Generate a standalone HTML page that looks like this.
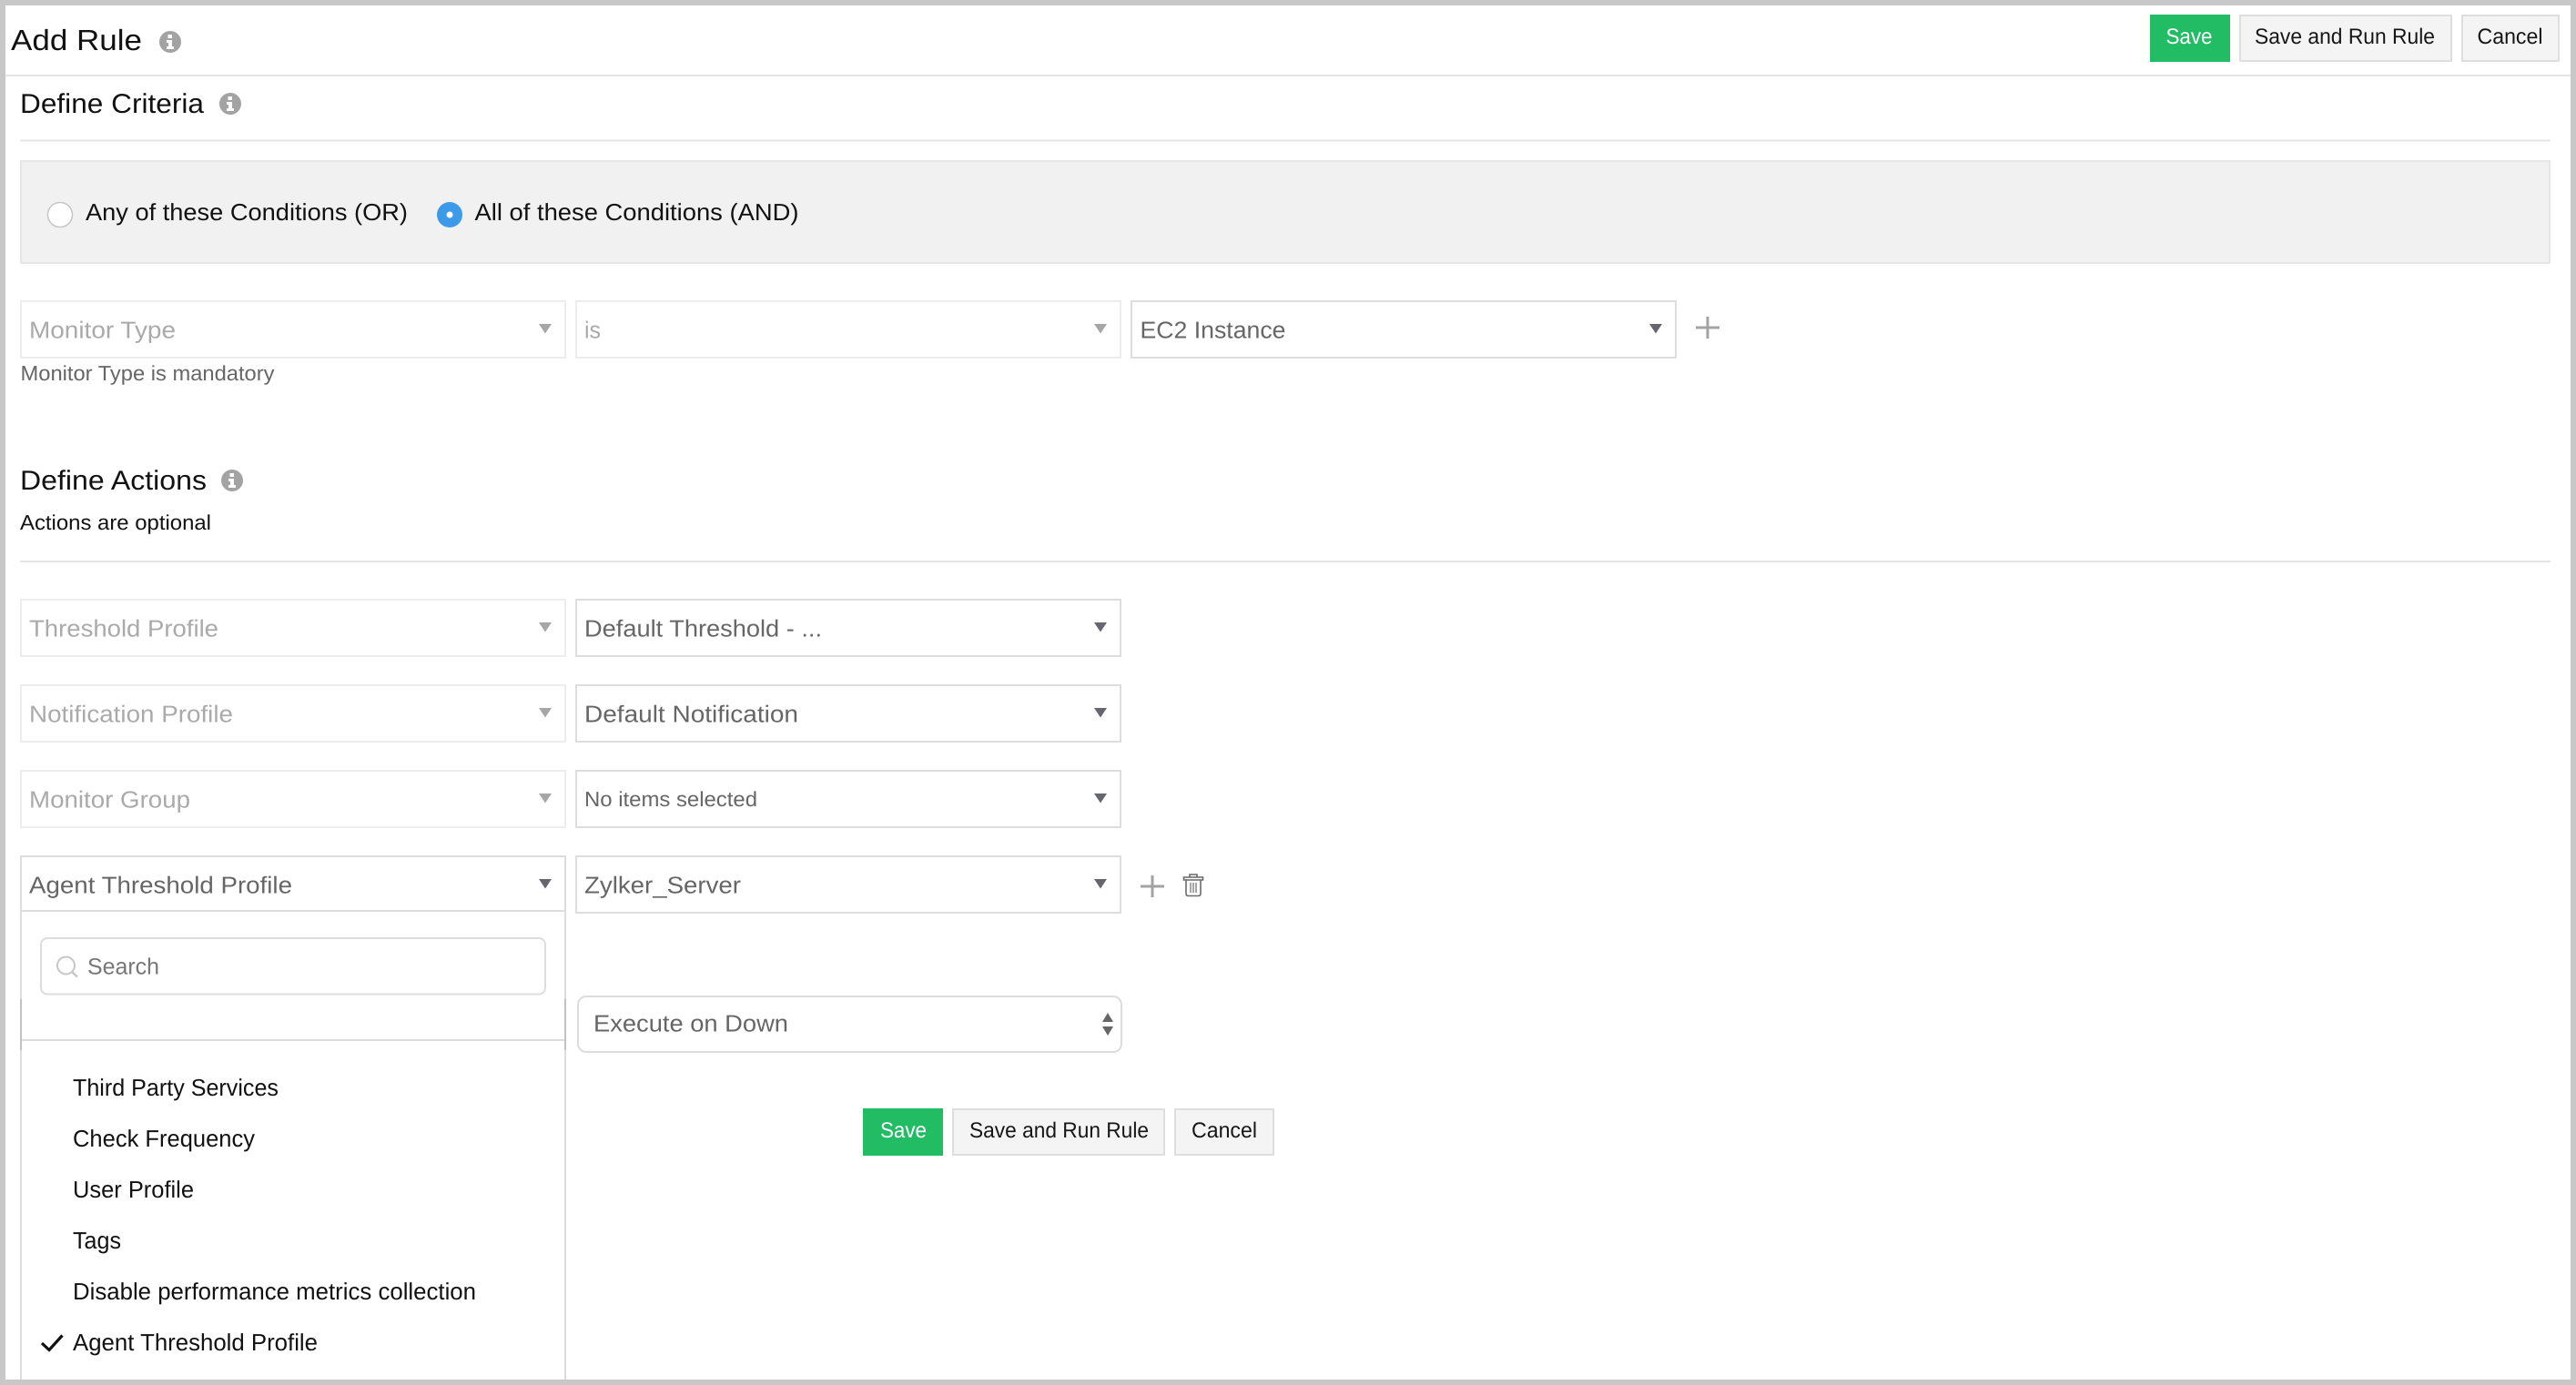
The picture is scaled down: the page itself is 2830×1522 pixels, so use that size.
<!DOCTYPE html>
<html lang="en">
<head>
<meta charset="utf-8">
<title>Add Rule</title>
<style>
html,body{margin:0;padding:0;background:#c8c8c8;width:2830px;height:1522px;overflow:hidden}
svg{display:block}
text{font-family:"Liberation Sans",sans-serif;font-size:26px;fill:#111;text-rendering:geometricPrecision}
.off{fill:#aaa}
.on{fill:#666}
.btn{font-size:24px;fill:#161616}
.sel-off{fill:#fff;stroke:#ededed;stroke-width:2}
.sel-on{fill:#fff;stroke:#ddd;stroke-width:2}
.gbtn{fill:#f4f4f4;stroke:#dedede;stroke-width:2}
</style>
</head>
<body>
<svg width="2830" height="1522" viewBox="0 0 2830 1522" xmlns="http://www.w3.org/2000/svg">
<defs>
<g id="info">
<circle cx="0" cy="0" r="12" fill="#a3a3a3"/>
<rect x="-2.500" y="-8" width="4.500" height="4" fill="#fff"/>
<path d="M-4-2H2V5H4V8H-4V5H-2V1H-4Z" fill="#fff"/>
</g>
<path id="aoff" d="M1 0H15L8 10.500Z" fill="#a6a6a6"/>
<path id="aon" d="M1 0H15L8 10.500Z" fill="#666670"/>
</defs>

<rect x="6" y="6" width="2818" height="1510" fill="#fff"/>

<!-- header -->
<text x="12" y="55" style="font-size:32px" textLength="144" lengthAdjust="spacingAndGlyphs">Add Rule</text>
<use href="#info" x="187" y="46"/>
<rect x="6" y="82" width="2818" height="2" fill="#e4e4e4"/>

<rect x="2362" y="16" width="88" height="52" fill="#22bc64"/>
<text class="btn" x="2379.500" y="48" style="fill:#fff" textLength="51" lengthAdjust="spacingAndGlyphs">Save</text>
<rect class="gbtn" x="2461" y="17" width="232" height="50"/>
<text class="btn" x="2477" y="48" textLength="198" lengthAdjust="spacingAndGlyphs">Save and Run Rule</text>
<rect class="gbtn" x="2705" y="17" width="106" height="50"/>
<text class="btn" x="2721.500" y="48" textLength="72" lengthAdjust="spacingAndGlyphs">Cancel</text>

<!-- define criteria -->
<text x="22" y="124" style="font-size:30px" textLength="202" lengthAdjust="spacingAndGlyphs">Define Criteria</text>
<use href="#info" x="253" y="114"/>
<rect x="22" y="153.500" width="2780" height="2" fill="#e4e4e4"/>

<rect x="23" y="177" width="2778" height="112" fill="#f1f1f1" stroke="#e6e6e6" stroke-width="2"/>
<circle cx="66" cy="236" r="13.500" fill="#fff" stroke="#c6c6c6" stroke-width="1.500"/>
<text x="94" y="242" textLength="354" lengthAdjust="spacingAndGlyphs">Any of these Conditions (OR)</text>
<circle cx="494" cy="236" r="14" fill="#3d9ae8"/>
<circle cx="494" cy="236" r="3.500" fill="#fff"/>
<text x="521.500" y="242" textLength="356" lengthAdjust="spacingAndGlyphs">All of these Conditions (AND)</text>

<!-- criteria row -->
<rect class="sel-off" x="23" y="331" width="598" height="62"/>
<text class="off" x="32" y="371.500" textLength="161" lengthAdjust="spacingAndGlyphs">Monitor Type</text>
<use href="#aoff" x="591" y="356"/>
<rect class="sel-off" x="633" y="331" width="598" height="62"/>
<text class="off" x="642" y="371.500" textLength="18" lengthAdjust="spacingAndGlyphs">is</text>
<use href="#aoff" x="1201" y="356"/>
<rect class="sel-on" x="1243" y="331" width="598" height="62"/>
<text class="on" x="1252.500" y="371.500" textLength="160" lengthAdjust="spacingAndGlyphs">EC2 Instance</text>
<use href="#aon" x="1811" y="356"/>
<path d="M1863 360H1889M1876 348V372" stroke="#a3a3a3" stroke-width="3" fill="none"/>
<text class="on" x="22.500" y="418" style="font-size:23px" textLength="279" lengthAdjust="spacingAndGlyphs">Monitor Type is mandatory</text>

<!-- define actions -->
<text x="22" y="538" style="font-size:30px" textLength="205" lengthAdjust="spacingAndGlyphs">Define Actions</text>
<use href="#info" x="255" y="528"/>
<text x="22" y="582" style="font-size:23px" textLength="210" lengthAdjust="spacingAndGlyphs">Actions are optional</text>
<rect x="22" y="616" width="2780" height="2" fill="#e4e4e4"/>

<!-- actions rows -->
<rect class="sel-off" x="23" y="659" width="598" height="62"/>
<text class="off" x="32" y="699.500" textLength="208" lengthAdjust="spacingAndGlyphs">Threshold Profile</text>
<use href="#aoff" x="591" y="684"/>
<rect class="sel-on" x="633" y="659" width="598" height="62"/>
<text class="on" x="642" y="699.500" textLength="261" lengthAdjust="spacingAndGlyphs">Default Threshold - ...</text>
<use href="#aon" x="1201" y="684"/>

<rect class="sel-off" x="23" y="753" width="598" height="62"/>
<text class="off" x="32" y="793.500" textLength="224" lengthAdjust="spacingAndGlyphs">Notification Profile</text>
<use href="#aoff" x="591" y="778"/>
<rect class="sel-on" x="633" y="753" width="598" height="62"/>
<text class="on" x="642" y="793.500" textLength="235" lengthAdjust="spacingAndGlyphs">Default Notification</text>
<use href="#aon" x="1201" y="778"/>

<rect class="sel-off" x="23" y="847" width="598" height="62"/>
<text class="off" x="32" y="887.500" textLength="177" lengthAdjust="spacingAndGlyphs">Monitor Group</text>
<use href="#aoff" x="591" y="872"/>
<rect class="sel-on" x="633" y="847" width="598" height="62"/>
<text class="on" x="642" y="886" style="font-size:23px" textLength="190" lengthAdjust="spacingAndGlyphs">No items selected</text>
<use href="#aon" x="1201" y="872"/>

<rect class="sel-on" x="633" y="941" width="598" height="62"/>
<text class="on" x="642" y="981.500" textLength="172" lengthAdjust="spacingAndGlyphs">Zylker_Server</text>
<use href="#aon" x="1201" y="966"/>
<path d="M1253 974H1279M1266 962V986" stroke="#a3a3a3" stroke-width="3" fill="none"/>
<g fill="none" stroke="#6a6a6a" stroke-width="1.600">
<path d="M1300.500 967V964H1321.500V967Z"/>
<path d="M1307 964V961H1315V964"/>
<path d="M1303 967V982Q1303 984.500 1305.500 984.500H1316.500Q1319 984.500 1319 982V967"/>
<path d="M1308 970V981M1311 970V981M1314 970V981" stroke-width="1.200"/>
</g>

<!-- execute select -->
<rect class="sel-on" x="635" y="1095" width="597" height="61" rx="9"/>
<text class="on" x="652" y="1133.500" textLength="214" lengthAdjust="spacingAndGlyphs">Execute on Down</text>
<path d="M1217 1113L1223 1123H1211Z" fill="#666"/>
<path d="M1211 1128H1223L1217 1138Z" fill="#666"/>

<!-- bottom buttons -->
<rect x="948" y="1218" width="88" height="52" fill="#22bc64"/>
<text class="btn" x="967" y="1250" style="fill:#fff" textLength="51" lengthAdjust="spacingAndGlyphs">Save</text>
<rect class="gbtn" x="1047" y="1219" width="232" height="50"/>
<text class="btn" x="1065" y="1250" textLength="197" lengthAdjust="spacingAndGlyphs">Save and Run Rule</text>
<rect class="gbtn" x="1291" y="1219" width="108" height="50"/>
<text class="btn" x="1309" y="1250" textLength="72" lengthAdjust="spacingAndGlyphs">Cancel</text>

<!-- dropdown -->
<rect class="sel-on" x="23" y="941" width="598" height="60"/>
<text class="on" x="32" y="981.500" textLength="289" lengthAdjust="spacingAndGlyphs">Agent Threshold Profile</text>
<use href="#aon" x="591" y="966"/>
<path d="M23 1001V1516M621 1001V1516" stroke="#ddd" stroke-width="2" fill="none"/>
<path d="M23 1098V1154M621 1098V1154" stroke="#c2c2c2" stroke-width="2" fill="none"/>
<rect x="45" y="1031" width="554" height="61.500" rx="7" fill="#fff" stroke="#ddd" stroke-width="2"/>
<circle cx="72.500" cy="1061" r="9.500" fill="none" stroke="#c6c6c6" stroke-width="2"/>
<path d="M79 1068L85 1073.500" stroke="#c6c6c6" stroke-width="2.500"/>
<text x="96" y="1070.500" style="font-size:25px;fill:#777" textLength="79" lengthAdjust="spacingAndGlyphs">Search</text>
<rect x="24" y="1142" width="596" height="2" fill="#ddd"/>
<text x="80" y="1204" textLength="226" lengthAdjust="spacingAndGlyphs">Third Party Services</text>
<text x="80" y="1260" textLength="200" lengthAdjust="spacingAndGlyphs">Check Frequency</text>
<text x="80" y="1316" textLength="133" lengthAdjust="spacingAndGlyphs">User Profile</text>
<text x="80" y="1372" textLength="53" lengthAdjust="spacingAndGlyphs">Tags</text>
<text x="80" y="1428" textLength="443" lengthAdjust="spacingAndGlyphs">Disable performance metrics collection</text>
<text x="80" y="1484" textLength="269" lengthAdjust="spacingAndGlyphs">Agent Threshold Profile</text>
<path d="M46 1476L54 1483.500L68.500 1467.500" fill="none" stroke="#111" stroke-width="3.200"/>
</svg>
</body>
</html>
